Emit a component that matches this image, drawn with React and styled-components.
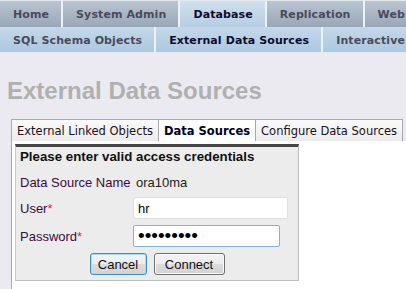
import React from 'react';
import styled, { createGlobalStyle } from 'styled-components';

const GlobalStyle = createGlobalStyle`
  html, body {
    margin: 0;
    padding: 0;
    background: #ebeaf0;
  }
  body {
    font-family: "Liberation Sans", Arial, sans-serif;
    overflow: hidden;
  }
`;

const Page = styled.div`
  width: 406px;
  height: 289px;
  overflow: hidden;
`;

const NavRow = styled.div`
  display: flex;
  height: ${(p) => (p.$level === 1 ? '27px' : '25px')};
  white-space: nowrap;
  overflow: hidden;
  background: ${(p) =>
    p.$level === 1
      ? 'linear-gradient(#b9c4d1, #99a7b7)'
      : 'linear-gradient(#c3d8ea, #aec8df)'};
  border-top: ${(p) => (p.$level === 1 ? '1px solid #e4e8ee' : 'none')};
  box-sizing: border-box;
`;

const NavTab = styled.div`
  display: flex;
  align-items: center;
  flex: none;
  padding: 1px 12px 0 13px;
  font-family: "DejaVu Sans", Verdana, sans-serif;
  font-weight: bold;
  font-size: 11px;
  letter-spacing: 0.1px;
  color: ${(p) => (p.$active ? '#0c0c30' : '#4a4a5c')};
  border-left: ${(p) => (p.$first ? 'none' : '2px solid #eef2f6')};
  background: ${(p) =>
    p.$active && p.$level === 1 ? 'linear-gradient(#cfe0ee, #b6cde2)' : 'transparent'};
`;

const Title = styled.h1`
  margin: 25px 0 15px 7px;
  font-size: 24px;
  line-height: 27px;
  font-weight: bold;
  color: #b0b0b0;
`;

const TabStrip = styled.div`
  display: flex;
  margin-left: 11px;
  height: 22px;
`;

const Tab = styled.div`
  display: flex;
  align-items: center;
  padding: 0 5px;
  font-family: "DejaVu Sans", Tahoma, sans-serif;
  font-size: 11.5px;
  font-weight: ${(p) => (p.$active ? 'bold' : 'normal')};
  color: ${(p) => (p.$active ? '#000020' : '#1a1020')};
  border: 1px solid #a9a9a9;
  border-bottom: none;
  margin-left: ${(p) => (p.$first ? '0' : '-1px')};
  background: ${(p) => (p.$active ? '#ffffff' : 'linear-gradient(#fafafa, #ececec)')};
  white-space: nowrap;
`;

const TabBody = styled.div`
  margin-left: 11px;
  background: #ffffff;
  border-left: 1px solid #a9a9a9;
  padding: 3px 0 20px 3px;
`;

const Panel = styled.div`
  width: 274px;
  background: #ececec;
  border-top: 3px solid #454545;
  border-left: 1px solid #c8c8c8;
  border-right: 1px solid #bdbdbd;
  border-bottom: 1px solid #bdbdbd;
  padding: 2px 4px 5px 4px;
  font-size: 13px;
`;

const PanelTitle = styled.div`
  font-weight: bold;
  font-size: 13.3px;
  line-height: 16px;
  color: #111;
`;

const Row = styled.div`
  display: flex;
  align-items: center;
  margin-top: ${(p) => p.$gap}px;
  height: ${(p) => p.$h}px;
`;

const Label = styled.span`
  width: 113px;
  flex: none;
  color: #3e0a3e;
`;

const Req = styled.span`
  color: #e8205a;
`;

const Value = styled.span`
  padding-left: 3px;
  color: #222;
`;

const Input = styled.input`
  box-sizing: border-box;
  width: ${(p) => p.$w}px;
  height: 22px;
  margin: 0;
  padding: 0 0 0 4px;
  font-family: "Liberation Sans", Arial, sans-serif;
  font-size: ${(p) => (p.type === 'password' ? '19px' : '13px')};
  color: #000;
  background: #fff;
  border: 1px solid ${(p) => (p.$focus ? '#7eb4d8' : '#e0e0e0')};
  border-radius: 2px;
  outline: none;
`;

const Buttons = styled.div`
  display: flex;
  justify-content: center;
  gap: 7px;
  margin-top: 6px;
`;

const Button = styled.button`
  box-sizing: border-box;
  width: ${(p) => p.$w}px;
  height: 22px;
  padding: 0;
  font-family: "Liberation Sans", Arial, sans-serif;
  font-size: 13px;
  color: #111;
  border: 1px solid ${(p) => (p.$default ? '#3c8ec4' : '#707070')};
  box-shadow: ${(p) => (p.$default ? 'inset 0 0 0 1px #a6dcf4' : 'inset 0 0 0 1px #fbfbfb')};
  border-radius: 3px;
  background: linear-gradient(#f4f4f4 0%, #ececec 50%, #dddddd 51%, #d2d2d2 100%);
`;

const topNav = ['Home', 'System Admin', 'Database', 'Replication', 'Web Applications'];
const subNav = ['SQL Schema Objects', 'External Data Sources', 'Interactive SQL'];
const tabs = ['External Linked Objects', 'Data Sources', 'Configure Data Sources'];

export default function App() {
  return (
    <Page>
      <GlobalStyle />
      <NavRow $level={1}>
        {topNav.map((t, i) => (
          <NavTab key={t} $level={1} $first={i === 0} $active={t === 'Database'}>
            {t}
          </NavTab>
        ))}
      </NavRow>
      <NavRow $level={2}>
        {subNav.map((t, i) => (
          <NavTab key={t} $level={2} $first={i === 0} $active={t === 'External Data Sources'}>
            {t}
          </NavTab>
        ))}
      </NavRow>
      <Title>External Data Sources</Title>
      <TabStrip>
        {tabs.map((t, i) => (
          <Tab key={t} $first={i === 0} $active={t === 'Data Sources'}>
            {t}
          </Tab>
        ))}
      </TabStrip>
      <TabBody>
        <Panel>
          <PanelTitle>Please enter valid access credentials</PanelTitle>
          <Row $gap={9} $h={16}>
            <Label>Data Source Name</Label>
            <Value>ora10ma</Value>
          </Row>
          <Row $gap={7} $h={22}>
            <Label>
              User<Req>*</Req>
            </Label>
            <Input type="text" defaultValue="hr" $w={155} />
          </Row>
          <Row $gap={6} $h={22}>
            <Label>
              Password<Req>*</Req>
            </Label>
            <Input type="password" defaultValue="password1" $w={147} $focus />
          </Row>
          <Buttons>
            <Button $default $w={57}>Cancel</Button>
            <Button $w={71}>Connect</Button>
          </Buttons>
        </Panel>
      </TabBody>
    </Page>
  );
}
